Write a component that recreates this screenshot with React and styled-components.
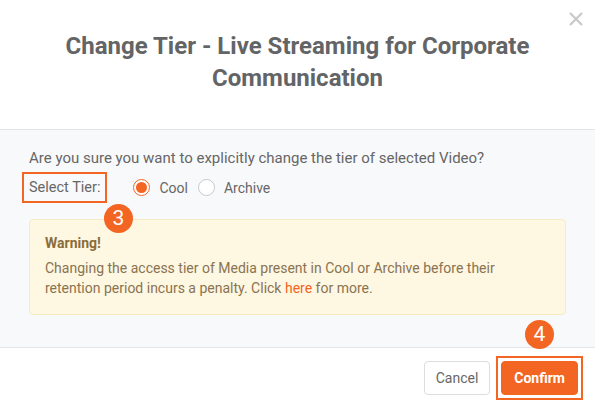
import React from 'react'
import styled, { createGlobalStyle } from 'styled-components'

const Global = createGlobalStyle`
	html, body {
		margin: 0;
		padding: 0;
		background: #ffffff;
	}
	* {
		box-sizing: border-box;
	}
`

const orange = '#f26522'

const Modal = styled.div`
	position: relative;
	width: 595px;
	height: 410px;
	background: #ffffff;
	font-family: Roboto, 'Liberation Sans', sans-serif;
	color: #666666;
	display: flex;
	flex-direction: column;
	overflow: hidden;
`

const Header = styled.div`
	position: relative;
	height: 130px;
	padding-top: 30px;
	border-bottom: 1px solid #e5e5e5;
`

const Title = styled.h2`
	margin: 0 auto;
	width: 500px;
	text-align: center;
	font-size: 24px;
	line-height: 32px;
	font-weight: 700;
	color: #636466;
`

const Close = styled.button`
	position: absolute;
	top: 8px;
	right: 9px;
	width: 20px;
	height: 22px;
	padding: 0;
	border: none;
	background: none;
	color: #c8c8c8;
	display: flex;
	align-items: center;
	justify-content: center;
`

const Body = styled.div`
	position: relative;
	height: 218px;
	background: #f8f9fb;
	padding: 19px 29px 0 29px;
	border-bottom: 1px solid #e5e5e5;
`

const Question = styled.p`
	margin: 0;
	font-size: 15px;
	line-height: 18px;
`

const TierRow = styled.div`
	display: flex;
	align-items: center;
	margin-top: 5px;
	margin-left: -7px;
`

const Outlined = styled.div`
	border: 2px solid ${orange};
	padding: ${({ pad }) => pad || '4px 5px'};
	display: inline-flex;
	align-items: center;
`

const Label = styled.span`
	font-size: 14.5px;
	line-height: 19px;
	color: #666666;
`

const Radios = styled.div`
	display: flex;
	align-items: center;
	margin-left: 26px;
	gap: 10px;
`

const RadioItem = styled.label`
	display: flex;
	align-items: center;
	gap: 9px;
	font-size: 14px;
	color: #666666;
`

const RadioCircle = styled.span`
	width: 17px;
	height: 17px;
	border-radius: 50%;
	border: 1px solid ${({ checked }) => (checked ? orange : '#c8c8c8')};
	background: #ffffff;
	display: flex;
	align-items: center;
	justify-content: center;

	&::after {
		content: '';
		display: ${({ checked }) => (checked ? 'block' : 'none')};
		width: 11px;
		height: 11px;
		border-radius: 50%;
		background: ${orange};
	}
`

const Warning = styled.div`
	margin-top: 16px;
	width: 537px;
	height: 96px;
	background: #fef7e2;
	border: 1px solid #f7ebc6;
	border-radius: 4px;
	padding: 14px 15px;
	color: #8a6d3b;
`

const WarningTitle = styled.div`
	font-size: 14px;
	font-weight: 700;
	line-height: 18px;
	margin-bottom: 6px;
`

const WarningText = styled.div`
	font-size: 14px;
	line-height: 20px;
	color: #8a7350;
`

const Link = styled.a`
	color: ${orange};
	text-decoration: none;
`

const Badge = styled.span`
	position: absolute;
	width: 29px;
	height: 29px;
	border-radius: 50%;
	background: ${orange};
	color: #ffffff;
	font-size: 21px;
	line-height: 29px;
	text-align: center;
	font-family: Roboto, 'Liberation Sans', sans-serif;
	z-index: 2;
`

const Footer = styled.div`
	flex: 1;
	display: flex;
	justify-content: flex-end;
	align-items: center;
	padding: 0 12px 2px 0;
	gap: 6px;
`

const Button = styled.button`
	height: 34px;
	padding: 0 ${({ primary }) => (primary ? '12px' : '11px')};
	font-family: Roboto, 'Liberation Sans', sans-serif;
	font-size: 14px;
	border-radius: 4px;
	border: 1px solid ${({ primary }) => (primary ? orange : '#dddddd')};
	background: ${({ primary }) => (primary ? orange : '#ffffff')};
	color: ${({ primary }) => (primary ? '#ffffff' : '#666666')};
	font-weight: ${({ primary }) => (primary ? 700 : 400)};
`

const App = () => (
	<Modal>
		<Global />
		<Header>
			<Title>Change Tier - Live Streaming for Corporate Communication</Title>
			<Close aria-label="Close">
				<svg width="16" height="16" viewBox="0 0 16 16">
					<path d="M2 2 L14 14 M14 2 L2 14" stroke="currentColor" strokeWidth="2.2" fill="none" />
				</svg>
			</Close>
		</Header>
		<Body>
			<Question>Are you sure you want to explicitly change the tier of selected Video?</Question>
			<TierRow>
				<Outlined>
					<Label>Select Tier:</Label>
				</Outlined>
				<Radios>
					<RadioItem>
						<RadioCircle checked />
						Cool
					</RadioItem>
					<RadioItem>
						<RadioCircle />
						Archive
					</RadioItem>
				</Radios>
			</TierRow>
			<Warning>
				<WarningTitle>Warning!</WarningTitle>
				<WarningText>
					Changing the access tier of Media present in Cool or Archive before their retention period incurs a
					penalty. Click <Link href="#">here</Link> for more.
				</WarningText>
			</Warning>
		</Body>
		<Footer>
			<Button>Cancel</Button>
			<Outlined pad="3px">
				<Button primary>Confirm</Button>
			</Outlined>
		</Footer>
		<Badge style={{ left: 104, top: 204 }}>3</Badge>
		<Badge style={{ left: 525, top: 320 }}>4</Badge>
	</Modal>
)

export default App
